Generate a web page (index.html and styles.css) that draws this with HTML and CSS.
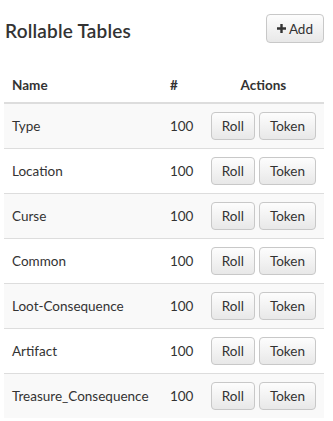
FILE: index.html
```html
<!DOCTYPE html>
<html lang="en">
<head>
    <meta charset="UTF-8">
    <title>Rollable Tables</title>
    <link rel="stylesheet" href="styles.css">
</head>
<body>
    <div class="page">
        <div class="top-bar">
            <h2>Rollable Tables</h2>
            <button class="btn add-btn">
                <svg class="plus" width="9" height="9" viewBox="0 0 9 9"><path d="M3.3 0h2.4v3.3H9v2.4H5.7V9H3.3V5.7H0V3.3h3.3z" fill="#333"/></svg>
                Add
            </button>
        </div>

        <table class="roll-table">
            <tr><th class="col-name">Name</th><th class="col-count">#</th><th class="col-actions">Actions</th></tr>
            <tr><td>Type</td><td>100</td><td class="actions"><button class="btn">Roll</button><button class="btn">Token</button></td></tr>
            <tr><td>Location</td><td>100</td><td class="actions"><button class="btn">Roll</button><button class="btn">Token</button></td></tr>
            <tr><td>Curse</td><td>100</td><td class="actions"><button class="btn">Roll</button><button class="btn">Token</button></td></tr>
            <tr><td>Common</td><td>100</td><td class="actions"><button class="btn">Roll</button><button class="btn">Token</button></td></tr>
            <tr><td>Loot-Consequence</td><td>100</td><td class="actions"><button class="btn">Roll</button><button class="btn">Token</button></td></tr>
            <tr><td>Artifact</td><td>100</td><td class="actions"><button class="btn">Roll</button><button class="btn">Token</button></td></tr>
            <tr><td>Treasure_Consequence</td><td>100</td><td class="actions"><button class="btn">Roll</button><button class="btn">Token</button></td></tr>
        </table>
    </div>
</body>
</html>
```

FILE: styles.css
```css
body {
    margin: 0;
    font-family: 'Lato', 'Noto Sans', sans-serif;
    color: #333;
    background: #fff;
}

.page {
    padding: 14px 9px 0 4px;
}

.top-bar {
    display: flex;
    justify-content: space-between;
    align-items: flex-start;
    padding-left: 1px;
}

h2 {
    margin: 5px 0 0;
    font-size: 19px;
    font-weight: 600;
    letter-spacing: 0.2px;
    color: #333;
}

/* Buttons */
.btn {
    font-family: inherit;
    font-size: 13.5px;
    color: #333;
    background: linear-gradient(#fdfdfd, #e8e8e8);
    border: 1px solid #c8c8c8;
    border-radius: 4px;
    padding: 5px 10px;
    cursor: pointer;
}

.add-btn {
    display: flex;
    align-items: center;
    gap: 3px;
    height: 29px;
    padding: 0 10px 0 10px;
}

/* Table */
.roll-table {
    width: 100%;
    border-collapse: collapse;
    margin-top: 25px;
    font-size: 13.5px;
}

th {
    text-align: left;
    font-weight: 700;
    padding: 9px 8px;
    border-bottom: 2px solid #ddd;
}

.col-actions {
    text-align: center;
}

td {
    padding: 0 8px;
    height: 44px;
    border-bottom: 1px solid #ddd;
}

tr:nth-child(even) td {
    background: #f9f9f9;
}

tr:last-child td {
    border-bottom: none;
}

.actions {
    width: 104px;
    white-space: nowrap;
}

.actions .btn + .btn {
    margin-left: 4px;
}
```
